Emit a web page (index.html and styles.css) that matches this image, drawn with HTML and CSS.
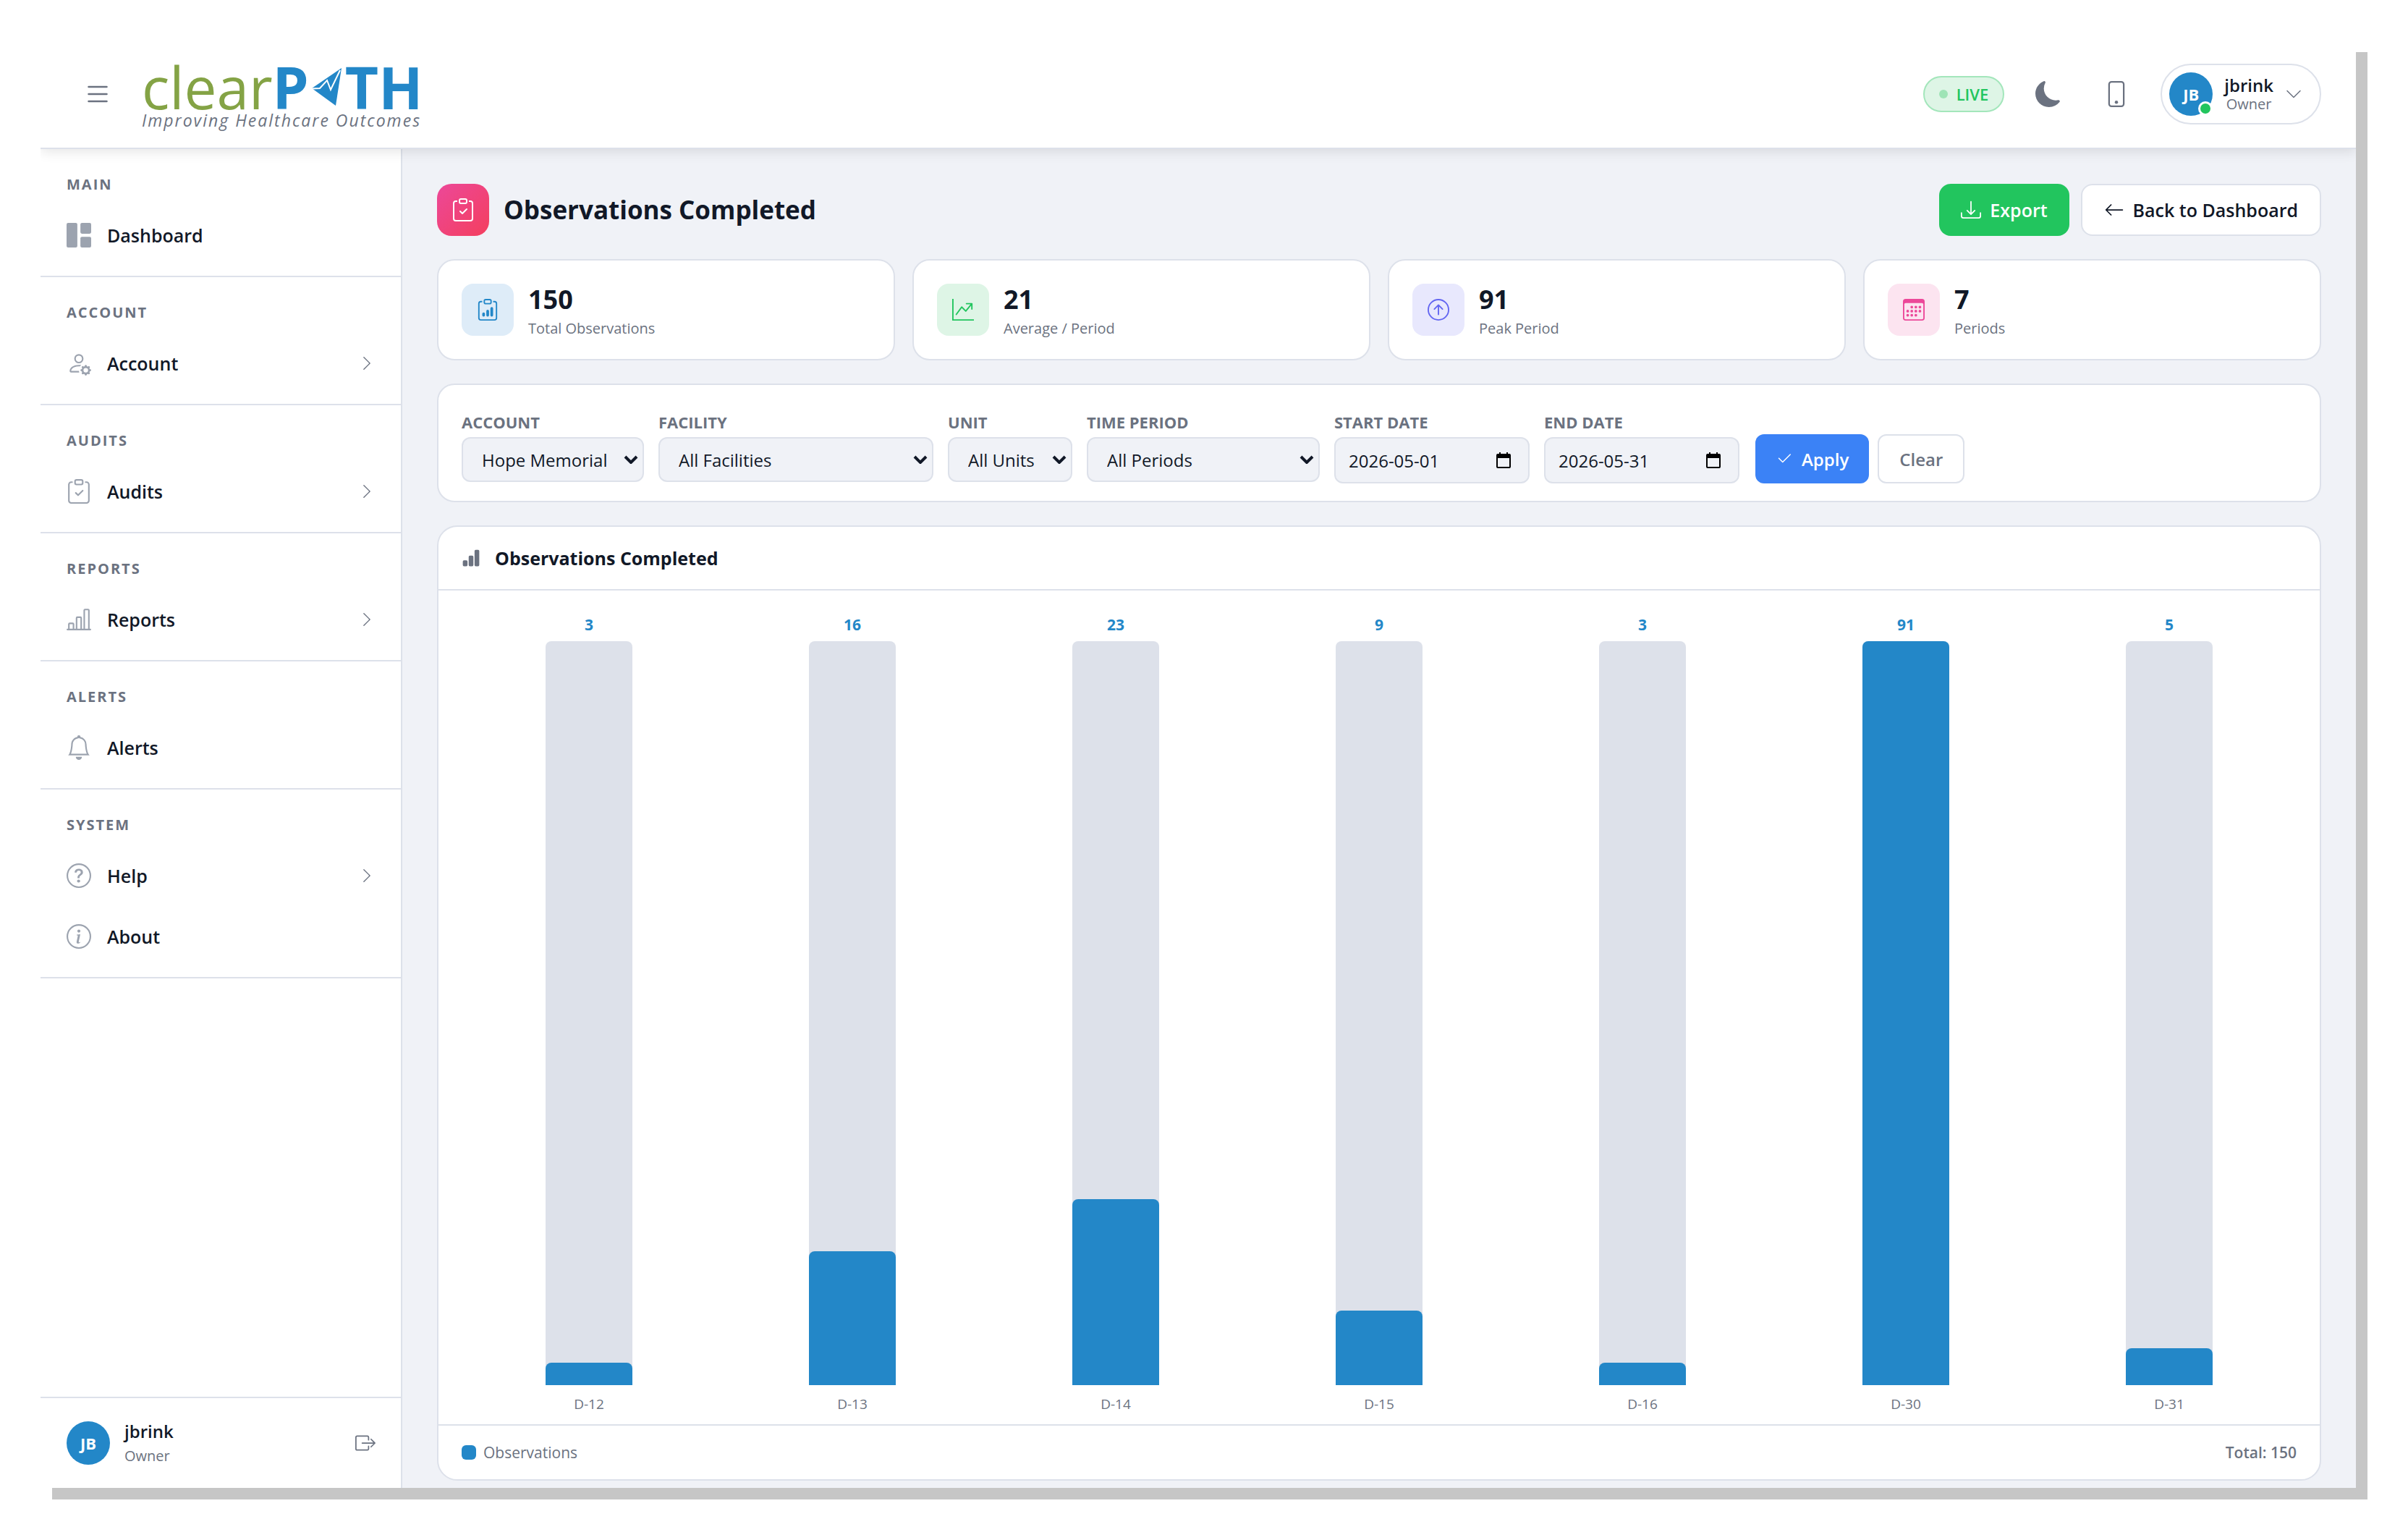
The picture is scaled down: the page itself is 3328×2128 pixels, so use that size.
FILE: index.html
```
<!DOCTYPE html>
<html lang="en">
<head>
    <meta charset="UTF-8">
    <meta name="viewport" content="width=device-width, initial-scale=1.0">
    <title>clearPATH - Observations Completed</title>
    <link rel="stylesheet" href="styles.css">
</head>
<body>
    <!-- Shared icon shapes -->
    <svg class="icon-defs" aria-hidden="true">
        <symbol id="clipboard" viewBox="0 0 16 16">
            <path d="M4 1.5H3a2 2 0 0 0-2 2V14a2 2 0 0 0 2 2h10a2 2 0 0 0 2-2V3.5a2 2 0 0 0-2-2h-1v1h1a1 1 0 0 1 1 1V14a1 1 0 0 1-1 1H3a1 1 0 0 1-1-1V3.5a1 1 0 0 1 1-1h1z"/>
            <path d="M9.5 1a.5.5 0 0 1 .5.5v1a.5.5 0 0 1-.5.5h-3a.5.5 0 0 1-.5-.5v-1a.5.5 0 0 1 .5-.5zm-3-1A1.5 1.5 0 0 0 5 1.5v1A1.5 1.5 0 0 0 6.5 4h3A1.5 1.5 0 0 0 11 2.5v-1A1.5 1.5 0 0 0 9.5 0z"/>
        </symbol>
        <symbol id="clipboard-check" viewBox="0 0 16 16">
            <use href="#clipboard"/>
            <path d="M10.854 7.146a.5.5 0 0 1 0 .708l-3 3a.5.5 0 0 1-.708 0l-1.5-1.5a.5.5 0 1 1 .708-.708L7.5 9.793l2.646-2.647a.5.5 0 0 1 .708 0"/>
        </symbol>
        <symbol id="chevron-right" viewBox="0 0 16 16">
            <path d="M4.646 1.646a.5.5 0 0 1 .708 0l6 6a.5.5 0 0 1 0 .708l-6 6a.5.5 0 0 1-.708-.708L10.293 8 4.646 2.354a.5.5 0 0 1 0-.708"/>
        </symbol>
    </svg>

    <div class="app">
        <header class="topbar">
            <button class="icon-btn" aria-label="Toggle menu">
                <svg class="icon-xl" viewBox="0 0 16 16"><path d="M2.5 12a.5.5 0 0 1 .5-.5h10a.5.5 0 0 1 0 1H3a.5.5 0 0 1-.5-.5m0-4a.5.5 0 0 1 .5-.5h10a.5.5 0 0 1 0 1H3a.5.5 0 0 1-.5-.5m0-4a.5.5 0 0 1 .5-.5h10a.5.5 0 0 1 0 1H3a.5.5 0 0 1-.5-.5"/></svg>
            </button>
            <a class="logo" href="#">
                <span class="logo-word">
                    <span class="logo-clear">clear</span><span class="logo-path">P</span>
                    <svg class="logo-plane" viewBox="0 0 42 52" aria-hidden="true">
                        <path fill="#2387c8" d="M41 0 0 28l33 24z"/>
                        <path fill="none" stroke="#fff" stroke-width="2" d="M0 28.5 11 28 21 17l5 13L39 3"/>
                    </svg>
                    <span class="logo-path">TH</span>
                </span>
                <span class="logo-tagline">Improving Healthcare Outcomes</span>
            </a>
            <div class="topbar-right">
                <span class="live"><span class="live-dot"></span>LIVE</span>
                <button class="icon-btn" aria-label="Dark mode">
                    <svg class="icon-lg" viewBox="0 0 16 16"><path d="M6 .278a.77.77 0 0 1 .08.858 7.2 7.2 0 0 0-.878 3.46c0 4.021 3.278 7.277 7.318 7.277q.792-.001 1.533-.16a.79.79 0 0 1 .81.316.73.73 0 0 1-.031.893A8.35 8.35 0 0 1 8.344 16C3.734 16 0 12.286 0 7.71 0 4.266 2.114 1.312 5.124.06A.75.75 0 0 1 6 .278"/></svg>
                </button>
                <button class="icon-btn" aria-label="Mobile view">
                    <svg class="icon-lg" viewBox="0 0 16 16"><path d="M11 1a1 1 0 0 1 1 1v12a1 1 0 0 1-1 1H5a1 1 0 0 1-1-1V2a1 1 0 0 1 1-1zM5 0a2 2 0 0 0-2 2v12a2 2 0 0 0 2 2h6a2 2 0 0 0 2-2V2a2 2 0 0 0-2-2z"/><path d="M8 14a1 1 0 1 0 0-2 1 1 0 0 0 0 2"/></svg>
                </button>
                <button class="user-menu">
                    <span class="avatar">JB<span class="online"></span></span>
                    <span class="user-menu-text">
                        <span class="user-name">jbrink</span>
                        <span class="user-role">Owner</span>
                    </span>
                    <svg class="icon-sm" viewBox="0 0 16 16"><path d="M1.646 4.646a.5.5 0 0 1 .708 0L8 10.293l5.646-5.647a.5.5 0 0 1 .708.708l-6 6a.5.5 0 0 1-.708 0l-6-6a.5.5 0 0 1 0-.708"/></svg>
                </button>
            </div>
        </header>

        <div class="layout">
            <aside class="sidebar">
                <nav>
                    <div class="nav-section">
                        <h3>Main</h3>
                        <a class="nav-item" href="#">
                            <svg class="nav-icon" viewBox="0 0 32 32"><rect width="14" height="32" rx="2"/><rect x="18" width="14" height="14" rx="2"/><rect x="18" y="18" width="14" height="14" rx="2"/></svg>
                            Dashboard
                        </a>
                    </div>
                    <div class="nav-section">
                        <h3>Account</h3>
                        <a class="nav-item" href="#">
                            <svg class="nav-icon" viewBox="0 0 16 16"><path d="M11 5a3 3 0 1 1-6 0 3 3 0 0 1 6 0M8 7a2 2 0 1 0 0-4 2 2 0 0 0 0 4m.256 7a4.5 4.5 0 0 1-.229-1.004H3c.001-.246.154-.986.832-1.664C4.484 10.68 5.711 10 8 10q.39 0 .74.025c.226-.341.496-.65.804-.918Q8.844 9.002 8 9c-5 0-6 3-6 4s1 1 1 1zm3.63-4.54c.18-.613 1.048-.613 1.229 0l.043.148a.64.64 0 0 0 .921.382l.136-.074c.561-.306 1.175.308.87.869l-.075.136a.64.64 0 0 0 .382.92l.149.045c.612.18.612 1.048 0 1.229l-.15.043a.64.64 0 0 0-.38.921l.074.136c.305.561-.309 1.175-.87.87l-.136-.075a.64.64 0 0 0-.92.382l-.045.149c-.18.612-1.048.612-1.229 0l-.043-.15a.64.64 0 0 0-.921-.38l-.136.074c-.561.305-1.175-.309-.87-.87l.075-.136a.64.64 0 0 0-.382-.92l-.148-.045c-.613-.18-.613-1.048 0-1.229l.148-.043a.64.64 0 0 0 .382-.921l-.074-.136c-.306-.561.308-1.175.869-.87l.136.075a.64.64 0 0 0 .92-.382zM14 12.5a1.5 1.5 0 1 0-3 0 1.5 1.5 0 0 0 3 0"/></svg>
                            Account
                            <svg class="nav-arrow"><use href="#chevron-right"/></svg>
                        </a>
                    </div>
                    <div class="nav-section">
                        <h3>Audits</h3>
                        <a class="nav-item" href="#">
                            <svg class="nav-icon"><use href="#clipboard-check"/></svg>
                            Audits
                            <svg class="nav-arrow"><use href="#chevron-right"/></svg>
                        </a>
                    </div>
                    <div class="nav-section">
                        <h3>Reports</h3>
                        <a class="nav-item" href="#">
                            <svg class="nav-icon" viewBox="0 0 16 16"><path d="M11 2a1 1 0 0 1 1-1h2a1 1 0 0 1 1 1v12h.5a.5.5 0 0 1 0 1H.5a.5.5 0 0 1 0-1H1v-3a1 1 0 0 1 1-1h2a1 1 0 0 1 1 1v3h1V7a1 1 0 0 1 1-1h2a1 1 0 0 1 1 1v7h1zm1 12h2V2h-2zm-3 0V7H7v7zm-5 0v-3H2v3z"/></svg>
                            Reports
                            <svg class="nav-arrow"><use href="#chevron-right"/></svg>
                        </a>
                    </div>
                    <div class="nav-section">
                        <h3>Alerts</h3>
                        <a class="nav-item" href="#">
                            <svg class="nav-icon" viewBox="0 0 16 16"><path d="M8 16a2 2 0 0 0 2-2H6a2 2 0 0 0 2 2M8 1.918l-.797.161A4 4 0 0 0 4 6c0 .628-.134 2.197-.459 3.742-.16.767-.376 1.566-.663 2.258h10.244c-.287-.692-.502-1.49-.663-2.258C12.134 8.197 12 6.628 12 6a4 4 0 0 0-3.203-3.92zM14.22 12c.223.447.481.801.78 1H1c.299-.199.557-.553.78-1C2.68 10.2 3 6.88 3 6c0-2.42 1.72-4.44 4.005-4.901a1 1 0 1 1 1.99 0A5 5 0 0 1 13 6c0 .88.32 4.2 1.22 6"/></svg>
                            Alerts
                        </a>
                    </div>
                    <div class="nav-section">
                        <h3>System</h3>
                        <a class="nav-item" href="#">
                            <svg class="nav-icon" viewBox="0 0 16 16"><path d="M8 15A7 7 0 1 1 8 1a7 7 0 0 1 0 14m0 1A8 8 0 1 0 8 0a8 8 0 0 0 0 16"/><path d="M5.255 5.786a.237.237 0 0 0 .241.247h.825c.138 0 .248-.113.266-.25.09-.656.54-1.134 1.342-1.134.686 0 1.314.343 1.314 1.168 0 .635-.374.927-.965 1.371-.673.489-1.206 1.06-1.168 1.987l.003.217a.25.25 0 0 0 .25.246h.811a.25.25 0 0 0 .25-.25v-.105c0-.718.273-.927 1.01-1.486.609-.463 1.244-.977 1.244-2.056 0-1.511-1.276-2.241-2.673-2.241-1.267 0-2.655.59-2.75 2.286m1.557 5.763c0 .533.425.927 1.01.927.609 0 1.028-.394 1.028-.927 0-.552-.42-.94-1.029-.94-.584 0-1.009.388-1.009.94"/></svg>
                            Help
                            <svg class="nav-arrow"><use href="#chevron-right"/></svg>
                        </a>
                        <a class="nav-item" href="#">
                            <svg class="nav-icon" viewBox="0 0 16 16"><path d="M8 15A7 7 0 1 1 8 1a7 7 0 0 1 0 14m0 1A8 8 0 1 0 8 0a8 8 0 0 0 0 16"/><path d="m8.93 6.588-2.29.287-.082.38.45.083c.294.07.352.176.288.469l-.738 3.468c-.194.897.105 1.319.808 1.319.545 0 1.178-.252 1.465-.598l.088-.416c-.2.176-.492.246-.686.246-.275 0-.375-.193-.304-.533zM9 4.5a1 1 0 1 1-2 0 1 1 0 0 1 2 0"/></svg>
                            About
                        </a>
                    </div>
                </nav>
                <div class="sidebar-footer">
                    <span class="avatar">JB</span>
                    <div class="sidebar-user">
                        <span class="user-name">jbrink</span>
                        <span class="user-role">Owner</span>
                    </div>
                    <button class="icon-btn logout" aria-label="Log out">
                        <svg class="icon-md" viewBox="0 0 16 16"><path d="M10 12.5a.5.5 0 0 1-.5.5h-8a.5.5 0 0 1-.5-.5v-9a.5.5 0 0 1 .5-.5h8a.5.5 0 0 1 .5.5v2a.5.5 0 0 0 1 0v-2A1.5 1.5 0 0 0 9.5 2h-8A1.5 1.5 0 0 0 0 3.5v9A1.5 1.5 0 0 0 1.5 14h8a1.5 1.5 0 0 0 1.5-1.5v-2a.5.5 0 0 0-1 0z"/><path d="M15.854 8.354a.5.5 0 0 0 0-.708l-3-3a.5.5 0 0 0-.708.708L14.293 7.5H5.5a.5.5 0 0 0 0 1h8.793l-2.147 2.146a.5.5 0 0 0 .708.708z"/></svg>
                    </button>
                </div>
            </aside>

            <main class="content">
                <div class="page-header">
                    <div class="page-icon"><svg class="icon-page"><use href="#clipboard-check"/></svg></div>
                    <h1>Observations Completed</h1>
                    <button class="btn btn-export">
                        <svg class="icon-md" viewBox="0 0 16 16"><path d="M.5 9.9a.5.5 0 0 1 .5.5v2.5a1 1 0 0 0 1 1h12a1 1 0 0 0 1-1v-2.5a.5.5 0 0 1 1 0v2.5a2 2 0 0 1-2 2H2a2 2 0 0 1-2-2v-2.5a.5.5 0 0 1 .5-.5"/><path d="M7.646 11.854a.5.5 0 0 0 .708 0l3-3a.5.5 0 0 0-.708-.708L8.5 10.293V1.5a.5.5 0 0 0-1 0v8.793L5.354 8.146a.5.5 0 1 0-.708.708z"/></svg>
                        Export
                    </button>
                    <a class="btn btn-back" href="#">
                        <svg class="icon-md" viewBox="0 0 16 16"><path d="M15 8a.5.5 0 0 0-.5-.5H2.707l3.147-3.146a.5.5 0 1 0-.708-.708l-4 4a.5.5 0 0 0 0 .708l4 4a.5.5 0 0 0 .708-.708L2.707 8.5H14.5A.5.5 0 0 0 15 8"/></svg>
                        Back to Dashboard
                    </a>
                </div>

                <section class="stats">
                    <div class="card stat">
                        <div class="stat-icon blue">
                            <svg class="icon-stat" viewBox="0 0 16 16"><use href="#clipboard"/><path d="M4 11a1 1 0 1 1 2 0v1a1 1 0 1 1-2 0zm6-4a1 1 0 1 1 2 0v5a1 1 0 1 1-2 0zM7 9a1 1 0 0 1 2 0v3a1 1 0 1 1-2 0z"/></svg>
                        </div>
                        <div class="stat-text">
                            <div class="stat-value">150</div>
                            <div class="stat-label">Total Observations</div>
                        </div>
                    </div>
                    <div class="card stat">
                        <div class="stat-icon green">
                            <svg class="icon-stat" viewBox="0 0 16 16"><path d="M0 0h1v15h15v1H0zm10 3.5a.5.5 0 0 1 .5-.5h4a.5.5 0 0 1 .5.5v4a.5.5 0 0 1-1 0V4.9l-3.613 4.417a.5.5 0 0 1-.74.037L7.06 6.767l-3.656 5.027a.5.5 0 0 1-.808-.588l4-5.5a.5.5 0 0 1 .758-.06l2.609 2.61L13.445 4H10.5a.5.5 0 0 1-.5-.5"/></svg>
                        </div>
                        <div class="stat-text">
                            <div class="stat-value">21</div>
                            <div class="stat-label">Average / Period</div>
                        </div>
                    </div>
                    <div class="card stat">
                        <div class="stat-icon indigo">
                            <svg class="icon-stat" viewBox="0 0 16 16"><path d="M1 8a7 7 0 1 0 14 0A7 7 0 0 0 1 8m15 0A8 8 0 1 1 0 8a8 8 0 0 1 16 0m-7.5 3.5a.5.5 0 0 1-1 0V5.707L5.354 7.854a.5.5 0 1 1-.708-.708l3-3a.5.5 0 0 1 .708 0l3 3a.5.5 0 0 1-.708.708L8.5 5.707z"/></svg>
                        </div>
                        <div class="stat-text">
                            <div class="stat-value">91</div>
                            <div class="stat-label">Peak Period</div>
                        </div>
                    </div>
                    <div class="card stat">
                        <div class="stat-icon pink">
                            <svg class="icon-stat" viewBox="0 0 16 16"><path d="M14 0H2a2 2 0 0 0-2 2v12a2 2 0 0 0 2 2h12a2 2 0 0 0 2-2V2a2 2 0 0 0-2-2M1 3.857C1 3.384 1.448 3 2 3h12c.552 0 1 .384 1 .857v10.286c0 .473-.448.857-1 .857H2c-.552 0-1-.384-1-.857z"/><path d="M6.5 7a1 1 0 1 0 0-2 1 1 0 0 0 0 2m3 0a1 1 0 1 0 0-2 1 1 0 0 0 0 2m3 0a1 1 0 1 0 0-2 1 1 0 0 0 0 2m-9 3a1 1 0 1 0 0-2 1 1 0 0 0 0 2m3 0a1 1 0 1 0 0-2 1 1 0 0 0 0 2m3 0a1 1 0 1 0 0-2 1 1 0 0 0 0 2m3 0a1 1 0 1 0 0-2 1 1 0 0 0 0 2m-9 3a1 1 0 1 0 0-2 1 1 0 0 0 0 2m3 0a1 1 0 1 0 0-2 1 1 0 0 0 0 2m3 0a1 1 0 1 0 0-2 1 1 0 0 0 0 2"/></svg>
                        </div>
                        <div class="stat-text">
                            <div class="stat-value">7</div>
                            <div class="stat-label">Periods</div>
                        </div>
                    </div>
                </section>

                <form class="card filters">
                    <div class="field account">
                        <label for="account">Account</label>
                        <select id="account"><option>Hope Memorial</option></select>
                    </div>
                    <div class="field facility">
                        <label for="facility">Facility</label>
                        <select id="facility"><option>All Facilities</option></select>
                    </div>
                    <div class="field unit">
                        <label for="unit">Unit</label>
                        <select id="unit"><option>All Units</option></select>
                    </div>
                    <div class="field period">
                        <label for="period">Time Period</label>
                        <select id="period"><option>All Periods</option></select>
                    </div>
                    <div class="field date">
                        <label for="startDate">Start Date</label>
                        <input type="text" id="startDate" value="2026-05-01">
                    </div>
                    <div class="field date">
                        <label for="endDate">End Date</label>
                        <input type="text" id="endDate" value="2026-05-31">
                    </div>
                    <div class="filter-actions">
                        <button type="button" class="btn btn-apply">
                            <svg class="icon-sm" viewBox="0 0 16 16"><path d="M13.854 3.646a.5.5 0 0 1 0 .708l-7 7a.5.5 0 0 1-.708 0l-3.5-3.5a.5.5 0 1 1 .708-.708L6.5 10.293l6.646-6.647a.5.5 0 0 1 .708 0"/></svg>
                            Apply
                        </button>
                        <button type="reset" class="btn btn-clear">Clear</button>
                    </div>
                </form>

                <section class="card chart-card">
                    <div class="chart-header">
                        <svg class="chart-icon" viewBox="0 0 16 16"><path d="M1 11a1 1 0 0 1 1-1h2a1 1 0 0 1 1 1v3a1 1 0 0 1-1 1H2a1 1 0 0 1-1-1zm5-4a1 1 0 0 1 1-1h2a1 1 0 0 1 1 1v7a1 1 0 0 1-1 1H7a1 1 0 0 1-1-1zm5-5a1 1 0 0 1 1-1h2a1 1 0 0 1 1 1v12a1 1 0 0 1-1 1h-2a1 1 0 0 1-1-1z"/></svg>
                        <h2>Observations Completed</h2>
                    </div>
                    <div class="chart">
                        <div class="bar-col">
                            <span class="bar-value">3</span>
                            <div class="bar-track"><div class="bar-fill" style="height: 3%"></div></div>
                            <span class="bar-label">D-12</span>
                        </div>
                        <div class="bar-col">
                            <span class="bar-value">16</span>
                            <div class="bar-track"><div class="bar-fill" style="height: 18%"></div></div>
                            <span class="bar-label">D-13</span>
                        </div>
                        <div class="bar-col">
                            <span class="bar-value">23</span>
                            <div class="bar-track"><div class="bar-fill" style="height: 25%"></div></div>
                            <span class="bar-label">D-14</span>
                        </div>
                        <div class="bar-col">
                            <span class="bar-value">9</span>
                            <div class="bar-track"><div class="bar-fill" style="height: 10%"></div></div>
                            <span class="bar-label">D-15</span>
                        </div>
                        <div class="bar-col">
                            <span class="bar-value">3</span>
                            <div class="bar-track"><div class="bar-fill" style="height: 3%"></div></div>
                            <span class="bar-label">D-16</span>
                        </div>
                        <div class="bar-col">
                            <span class="bar-value">91</span>
                            <div class="bar-track"><div class="bar-fill" style="height: 100%"></div></div>
                            <span class="bar-label">D-30</span>
                        </div>
                        <div class="bar-col">
                            <span class="bar-value">5</span>
                            <div class="bar-track"><div class="bar-fill" style="height: 5%"></div></div>
                            <span class="bar-label">D-31</span>
                        </div>
                    </div>
                    <div class="chart-footer">
                        <span class="legend"><span class="legend-swatch"></span>Observations</span>
                        <span class="chart-total">Total: 150</span>
                    </div>
                </section>
            </main>
        </div>
    </div>
</body>
</html>
```

FILE: styles.css
```
:root {
    --brand: #2387c8;
    --text: #111827;
    --muted: #6b7280;
    --border: #dde1ea;
    --bg: #f0f2f7;
}

* {
    box-sizing: border-box;
}

body {
    margin: 0;
    padding: 56px 72px 72px 56px;
    height: 100vh;
    background: #ffffff;
    font-family: 'Segoe UI', 'Open Sans', 'Noto Sans', sans-serif;
    font-size: 24px;
    color: var(--text);
}

a {
    color: inherit;
    text-decoration: none;
}

button,
select,
input {
    font-family: inherit;
    font-size: 24px;
    color: inherit;
}

button {
    cursor: pointer;
}

svg {
    fill: currentColor;
    flex-shrink: 0;
}

.icon-defs {
    position: absolute;
    width: 0;
    height: 0;
}

.icon-sm {
    width: 24px;
    height: 24px;
}

.icon-md {
    width: 28px;
    height: 28px;
}

.icon-lg {
    width: 36px;
    height: 36px;
}

.icon-xl {
    width: 40px;
    height: 40px;
}

.icon-page {
    width: 32px;
    height: 32px;
}

.icon-stat {
    width: 30px;
    height: 30px;
}

.app {
    display: flex;
    flex-direction: column;
    height: 100%;
    background: var(--bg);
    box-shadow: 16px 16px 0 #c6c6c6;
}

/* Top bar */
.topbar {
    display: flex;
    align-items: center;
    height: 150px;
    padding: 0 48px 0 46px;
    background: #ffffff;
    border-bottom: 2px solid var(--border);
    box-shadow: 0 4px 16px rgba(0, 0, 0, 0.1);
    clip-path: inset(0 0 -24px 0);
    z-index: 1;
}

.icon-btn {
    display: flex;
    align-items: center;
    justify-content: center;
    width: 66px;
    height: 60px;
    padding: 0;
    border: none;
    background: none;
    color: var(--muted);
}

.logo {
    display: flex;
    flex-direction: column;
    margin-left: 28px;
    padding-top: 8px;
}

.logo-word {
    display: flex;
    align-items: center;
    height: 64px;
    font-family: 'Open Sans', sans-serif;
    font-size: 80px;
    line-height: 64px;
}

.logo-clear {
    color: #84a345;
}

.logo-path {
    font-weight: 700;
    color: var(--brand);
}

.logo-plane {
    width: 42px;
    height: 52px;
    margin: 0 4px;
}

.logo-tagline {
    font-size: 23px;
    line-height: 28px;
    font-style: italic;
    letter-spacing: 2px;
    color: var(--muted);
}

.topbar-right {
    display: flex;
    align-items: center;
    gap: 28px;
    margin-left: auto;
}

.live {
    display: flex;
    align-items: center;
    gap: 12px;
    height: 50px;
    padding: 0 20px;
    border: 2px solid #a3e6bb;
    border-radius: 25px;
    background: #def5e6;
    font-size: 22px;
    font-weight: 600;
    color: #22c55e;
}

.live-dot {
    width: 12px;
    height: 12px;
    border-radius: 50%;
    background: #9ee4b6;
}

.user-menu {
    display: flex;
    align-items: center;
    gap: 16px;
    height: 84px;
    padding: 0 24px 0 10px;
    border: 2px solid var(--border);
    border-radius: 42px;
    background: #ffffff;
}

.user-menu .icon-sm {
    color: var(--muted);
}

.user-menu-text {
    display: flex;
    flex-direction: column;
    align-items: center;
}

.avatar {
    position: relative;
    display: flex;
    align-items: center;
    justify-content: center;
    width: 60px;
    height: 60px;
    border-radius: 50%;
    background: var(--brand);
    font-size: 22px;
    font-weight: 700;
    color: #ffffff;
}

.online {
    position: absolute;
    right: 0;
    bottom: 0;
    width: 20px;
    height: 20px;
    border: 3px solid #ffffff;
    border-radius: 50%;
    background: #22c55e;
}

.user-name {
    font-size: 24px;
    font-weight: 600;
    line-height: 28px;
}

.user-role {
    font-size: 20px;
    line-height: 24px;
    color: var(--muted);
}

/* Sidebar */
.layout {
    display: flex;
    flex: 1;
    min-height: 0;
}

.sidebar {
    display: flex;
    flex-direction: column;
    justify-content: space-between;
    width: 500px;
    flex-shrink: 0;
    background: #ffffff;
    border-right: 2px solid var(--border);
}

.nav-section {
    padding: 12px 0 14px;
    border-bottom: 2px solid var(--border);
}

.nav-section h3 {
    margin: 0;
    padding: 22px 36px 13px;
    font-size: 20px;
    line-height: 30px;
    letter-spacing: 2px;
    text-transform: uppercase;
    color: var(--muted);
}

.nav-item {
    display: flex;
    align-items: center;
    gap: 22px;
    height: 84px;
    padding: 0 36px;
    font-size: 25px;
    font-weight: 600;
}

.nav-icon {
    width: 34px;
    height: 34px;
    color: #9ca3af;
}

.nav-arrow {
    width: 22px;
    height: 22px;
    margin-left: auto;
    color: var(--muted);
}

.sidebar-footer {
    display: flex;
    align-items: center;
    gap: 20px;
    padding: 32px 16px 32px 36px;
    border-top: 2px solid var(--border);
}

.sidebar-user {
    display: flex;
    flex-direction: column;
    gap: 8px;
}

.logout {
    margin-left: auto;
}

/* Content */
.content {
    display: flex;
    flex-direction: column;
    flex: 1;
    gap: 32px;
    min-width: 0;
    padding: 48px 48px 10px;
}

.page-header {
    display: flex;
    align-items: center;
    gap: 16px;
}

.page-icon {
    display: flex;
    align-items: center;
    justify-content: center;
    width: 72px;
    height: 72px;
    margin-right: 4px;
    border-radius: 20px;
    background: linear-gradient(135deg, #ec4899, #f43f5e);
    color: #ffffff;
}

.page-header h1 {
    margin: 0 auto 0 0;
    font-size: 35px;
    line-height: 48px;
    font-weight: 700;
}

.btn {
    display: flex;
    align-items: center;
    justify-content: center;
    gap: 12px;
    height: 72px;
    padding: 0 30px;
    border: none;
    border-radius: 16px;
    font-size: 25px;
    font-weight: 600;
}

.btn-export {
    background: #22c55e;
    color: #ffffff;
}

.btn-back {
    border: 2px solid var(--border);
    background: #ffffff;
}

.card {
    background: #ffffff;
    border: 2px solid var(--border);
    border-radius: 24px;
}

.stats {
    display: grid;
    grid-template-columns: repeat(4, 1fr);
    gap: 24px;
}

.stat {
    display: flex;
    gap: 20px;
    padding: 32px 32px 22px;
}

.stat-icon {
    display: flex;
    align-items: center;
    justify-content: center;
    width: 72px;
    height: 72px;
    border-radius: 16px;
}

.blue {
    background: #deecf8;
    color: var(--brand);
}

.green {
    background: #def5e6;
    color: #22c55e;
}

.indigo {
    background: #e8e8fd;
    color: #6366f1;
}

.pink {
    background: #fce4f0;
    color: #ec4899;
}

.stat-text {
    padding-top: 2px;
}

.stat-value {
    font-size: 36px;
    line-height: 40px;
    font-weight: 700;
}

.stat-label {
    font-size: 20px;
    line-height: 40px;
    color: var(--muted);
}

/* Filters */
.filters {
    display: flex;
    gap: 20px;
    padding: 34px 32px 24px;
}

.field {
    display: flex;
    flex-direction: column;
    gap: 4px;
}

.account {
    width: 252px;
}

.facility {
    width: 380px;
}

.unit {
    width: 172px;
}

.period {
    width: 322px;
}

.date {
    width: 270px;
}

.field label {
    font-size: 22px;
    line-height: 34px;
    font-weight: 700;
    text-transform: uppercase;
    color: var(--muted);
}

.field select,
.field input {
    width: 100%;
    border: 2px solid var(--border);
    border-radius: 12px;
    background-color: var(--bg);
    background-repeat: no-repeat;
}

.field select {
    height: 62px;
    padding: 0 26px;
    appearance: none;
    background-image: url("data:image/svg+xml,%3Csvg xmlns='http://www.w3.org/2000/svg' viewBox='0 0 20 12'%3E%3Cpath d='M2 2l8 8 8-8' fill='none' stroke='%23111827' stroke-width='4'/%3E%3C/svg%3E");
    background-position: right 6px center;
    background-size: 20px 12px;
}

.field input {
    height: 64px;
    padding: 0 18px;
    background-image: url("data:image/svg+xml,%3Csvg xmlns='http://www.w3.org/2000/svg' viewBox='0 0 20 22'%3E%3Cpath d='M4 0h2v2h8V0h2v2h2a2 2 0 0 1 2 2v16a2 2 0 0 1-2 2H2a2 2 0 0 1-2-2V4a2 2 0 0 1 2-2h2zM2 8v12h16V8z'/%3E%3C/svg%3E");
    background-position: right 24px center;
    background-size: 20px 22px;
}

.filter-actions {
    display: flex;
    align-items: flex-end;
    gap: 12px;
    margin-left: 2px;
}

.filter-actions .btn {
    height: 68px;
    padding: 0 28px;
    border-radius: 12px;
    font-size: 24px;
}

.filter-actions .btn-apply {
    background: #3b82f6;
    color: #ffffff;
}

.filter-actions .btn-clear {
    border: 2px solid var(--border);
    background: #ffffff;
    color: var(--muted);
}

/* Chart */
.chart-card {
    display: flex;
    flex-direction: column;
    flex: 1;
    min-height: 0;
    border-radius: 28px;
}

.chart-header {
    display: flex;
    align-items: center;
    gap: 20px;
    height: 88px;
    padding: 0 32px;
    border-bottom: 2px solid var(--border);
}

.chart-icon {
    width: 26px;
    height: 26px;
    color: var(--muted);
}

.chart-header h2 {
    margin: 0;
    font-size: 25px;
    font-weight: 700;
}

.chart {
    display: flex;
    flex: 1;
    gap: 12px;
    min-height: 0;
    padding: 32px 32px 14px;
}

.bar-col {
    display: flex;
    flex-direction: column;
    align-items: center;
    flex: 1;
}

.bar-value {
    margin-bottom: 8px;
    font-size: 21px;
    line-height: 30px;
    font-weight: 700;
    color: var(--brand);
}

.bar-track {
    display: flex;
    align-items: flex-end;
    flex: 1;
    width: 120px;
    border-radius: 8px 8px 0 0;
    background: var(--border);
}

.bar-fill {
    width: 100%;
    border-radius: 8px 8px 0 0;
    background: var(--brand);
}

.bar-label {
    margin-top: 12px;
    font-size: 19px;
    line-height: 28px;
    color: var(--muted);
}

.chart-footer {
    display: flex;
    align-items: center;
    justify-content: space-between;
    height: 76px;
    padding: 0 32px;
    border-top: 2px solid var(--border);
    font-size: 21px;
    color: var(--muted);
}

.legend {
    display: flex;
    align-items: center;
    gap: 10px;
}

.legend-swatch {
    width: 20px;
    height: 20px;
    border-radius: 6px;
    background: var(--brand);
}

.chart-total {
    font-weight: 600;
}
```
